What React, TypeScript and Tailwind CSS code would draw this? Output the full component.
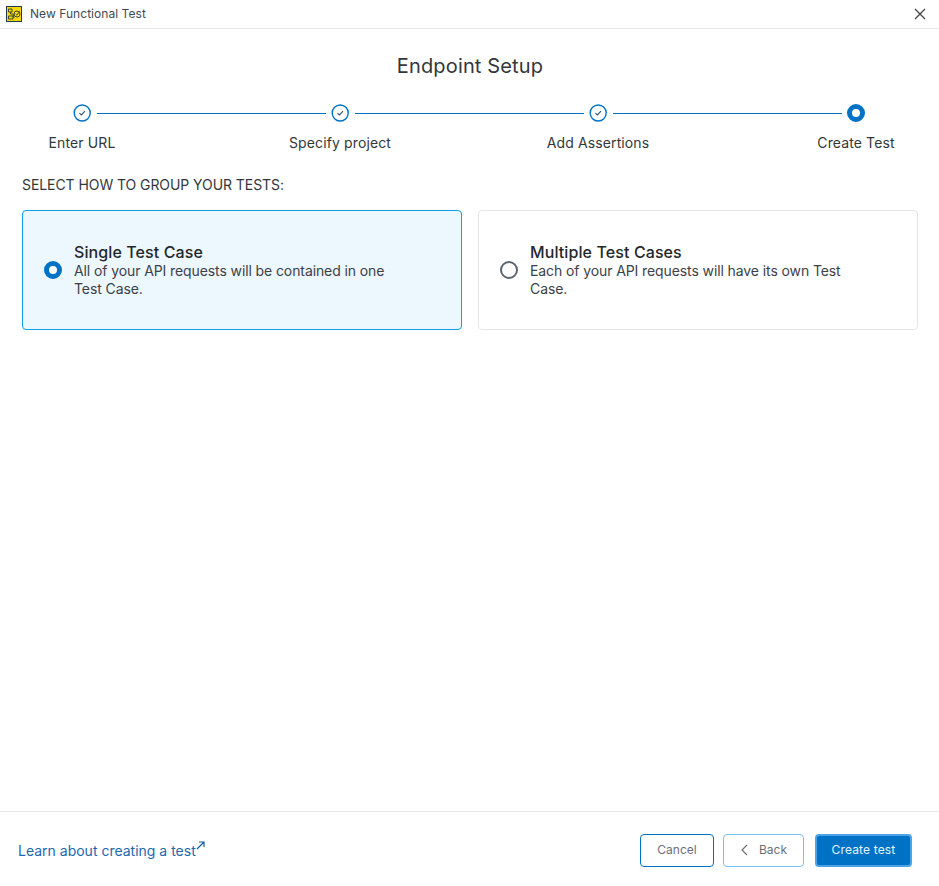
import React from "react";

function Done() {
  return (
    <svg width="18" height="18" viewBox="0 0 18 18" fill="none" className="shrink-0">
      <circle cx="9.2" cy="9" r="8" stroke="#0072c6" strokeWidth="1.4" />
      <path d="M6.4 9.2 L8.4 11 L12 7.2" stroke="#33536b" strokeWidth="1.1" />
    </svg>
  );
}

function Line() {
  return <div className="h-px flex-1 ml-[6px] mr-[5px] bg-[#0072c6]" />;
}

function Radio({ on }: { on: boolean }) {
  return on ? (
    <div className="w-[18px] h-[18px] shrink-0 rounded-full border-[5px] border-[#0072c6] bg-white" />
  ) : (
    <div className="w-[18px] h-[18px] shrink-0 rounded-full border-2 border-[#5c6670] bg-white" />
  );
}

function Card({ on, title, text }: { on: boolean; title: string; text: string }) {
  return (
    <div
      className={
        "flex-1 h-[120px] rounded-[4px] border flex items-center pl-[21px] pr-[50px] gap-[12px] " +
        (on ? "bg-[#ecf7fe] border-[#0ea0e9]" : "bg-white border-[#e6e6e6]")
      }
    >
      <Radio on={on} />
      <div className="flex flex-col">
        <div className="text-[16px] leading-[20px] font-medium tracking-[0.1px] text-[#23272b]">{title}</div>
        <div className="text-[14px] leading-[18px] tracking-[-0.1px] text-[#3d4148]">{text}</div>
      </div>
    </div>
  );
}

export default function App() {
  const labels = ["Enter URL", "Specify project", "Add Assertions", "Create Test"];
  return (
    <div
      className="w-[939px] h-[886px] bg-white flex flex-col overflow-hidden"
      style={{ fontFamily: "Inter, 'Noto Sans', sans-serif" }}
    >
      <div className="h-[29px] shrink-0 border-b border-[#e6e6e6] flex items-center pl-[6px] pr-[13px]">
        <svg width="16" height="16" viewBox="0 0 16 16" className="shrink-0">
          <rect x="0.5" y="0.5" width="15" height="15" fill="#f7d70c" stroke="#1d3a4a" />
          <path d="M2.5 3 H6 V6 H2.5 Z M4.5 6 V8 H7 L8 12 M2.5 10 H7 V13 H2.5 Z" stroke="#3c4a2a" strokeWidth="1" fill="none" />
          <circle cx="11" cy="8" r="3" stroke="#3c4a2a" strokeWidth="1" fill="none" />
          <path d="M9.7 8 L10.8 9.1 L13.5 5.6" stroke="#3c4a2a" strokeWidth="1" fill="none" />
        </svg>
        <div className="ml-[8px] text-[12px] tracking-[0.05px] text-[#414a56]">New Functional Test</div>
        <svg width="12" height="12" viewBox="0 0 12 12" className="ml-auto" fill="none">
          <path d="M1 1 L11 11 M11 1 L1 11" stroke="#3a3a3a" strokeWidth="1.1" />
        </svg>
      </div>

      <div className="flex-1 flex flex-col">
        <div className="mt-[24px] h-[26px] leading-[26px] text-center text-[20px] tracking-[0.15px] text-[#33373c] pl-[1px]">
          Endpoint Setup
        </div>

        <div className="mt-[25px] flex items-center pl-[73px] pr-[74px] h-[18px]">
          <Done />
          <Line />
          <Done />
          <Line />
          <Done />
          <Line />
          <div className="w-[18px] h-[18px] shrink-0 rounded-full border-[5px] border-[#0072c6] bg-white" />
        </div>

        <div className="mt-[11px] flex pl-[23px] gap-[140px]">
          {labels.map((l) => (
            <div key={l} className="w-[118px] shrink-0 text-center text-[14px] leading-[20px] tracking-[0.12px] text-[#33373c]">
              {l}
            </div>
          ))}
        </div>

        <div className="mt-[22px] mx-[22px] text-[14px] leading-[20px] tracking-[-0.07px] text-[#33373c]">
          SELECT HOW TO GROUP YOUR TESTS:
        </div>

        <div className="mt-[15px] ml-[22px] flex gap-[16px] w-[896px]">
          <Card on title="Single Test Case" text="All of your API requests will be contained in one Test Case." />
          <Card on={false} title="Multiple Test Cases" text="Each of your API requests will have its own Test Case." />
        </div>
      </div>

      <div className="h-[75px] shrink-0 border-t border-[#e6e6e6] flex items-center pl-[18px] pr-[27px] pt-[2px]">
        <a className="text-[14px] text-[#2268ad] flex items-start">
          <span>Learn about creating a test</span>
          <svg width="9" height="9" viewBox="0 0 9 9" fill="none" className="mt-[1px]">
            <path d="M1 8 L8 1 M3 1 H8 V6" stroke="#0f5f9c" strokeWidth="1.2" />
          </svg>
        </a>
        <button className="ml-auto w-[74px] h-[33px] rounded-[4px] border border-[#0072c6] bg-white text-[12px] text-[#6b7078] flex items-center justify-center">
          Cancel
        </button>
        <button className="ml-[9px] w-[81px] h-[33px] rounded-[4px] border border-[#7cc2f0] bg-white text-[12px] text-[#6b7078] flex items-center justify-center gap-[11px]">
          <svg width="8" height="12" viewBox="0 0 8 12" fill="none">
            <path d="M7 1 L2 6 L7 11" stroke="#6b7078" strokeWidth="1.2" />
          </svg>
          Back
        </button>
        <button className="ml-[11px] w-[97px] h-[33px] rounded-[4px] border-2 border-[#4da3e8] bg-[#0072c6] text-[12px] tracking-[0.15px] text-[#e6f2fb] flex items-center justify-center">
          Create test
        </button>
      </div>
    </div>
  );
}
